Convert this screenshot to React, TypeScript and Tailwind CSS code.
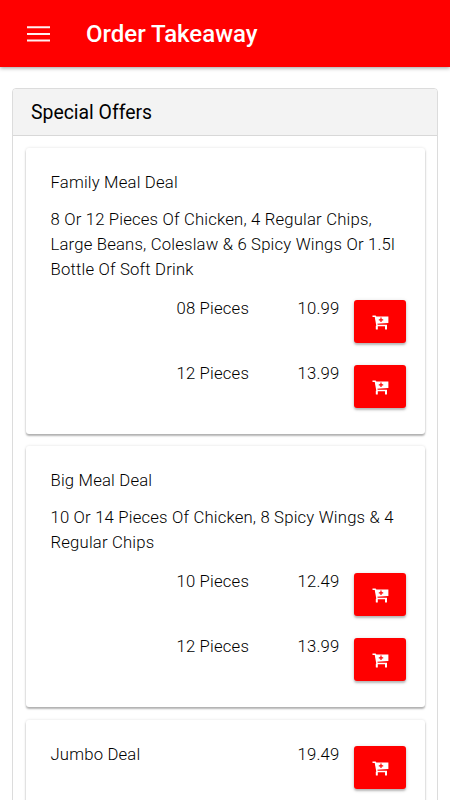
import React from 'react'

type Portion = {
    label: string;
    price: string;
};

type Offer = {
    title: string;
    description?: string;
    price?: string;
    portions: Portion[];
};

const offers: Offer[] = [
    {
        title: 'Family Meal Deal',
        description: '8 Or 12 Pieces Of Chicken, 4 Regular Chips, Large Beans, Coleslaw & 6 Spicy Wings Or 1.5l Bottle Of Soft Drink',
        portions: [
            { label: '08 Pieces', price: '10.99' },
            { label: '12 Pieces', price: '13.99' },
        ],
    },
    {
        title: 'Big Meal Deal',
        description: '10 Or 14 Pieces Of Chicken, 8 Spicy Wings & 4 Regular Chips',
        portions: [
            { label: '10 Pieces', price: '12.49' },
            { label: '12 Pieces', price: '13.99' },
        ],
    },
    {
        title: 'Jumbo Deal',
        price: '19.49',
        portions: [],
    },
];

const MenuIcon = () => (
    <svg width="23" height="16" viewBox="0 0 23 16" fill="none" aria-hidden="true">
        <path d="M0 1.3h23M0 7.9h23M0 14.5h23" stroke="#fff0f0" strokeWidth="2" />
    </svg>
)

const CartPlusIcon = () => (
    <svg width="17" height="15" viewBox="0 0 17 15" fill="none" aria-hidden="true">
        <path d="M0.5 1.3H3.4L5 10.4H15" stroke="#fff" strokeWidth="1.5" strokeLinejoin="round" />
        <path d="M3.2 1.6H16.4V8L4.6 8.8Z" fill="#fff" />
        <path d="M9 2.6v4.4M6.8 4.8h4.4" stroke="#f00" strokeWidth="1.2" />
        <rect x="3.8" y="10.4" width="2" height="4" rx="0.5" fill="#fff" />
        <rect x="13" y="10.4" width="2" height="4" rx="0.5" fill="#fff" />
    </svg>
)

const AddButton = ({ name }: { name: string }) => (
    <button
        aria-label={`Add ${name}`}
        className="mt-[4px] flex h-[43px] w-[52px] shrink-0 items-center justify-center rounded-[3px] bg-[#ff0000] pt-[2px] pl-[2px] shadow-[0_2px_2px_rgba(0,0,0,0.2),0_1px_4px_rgba(0,0,0,0.16)]"
    >
        <CartPlusIcon />
    </button>
)

const PriceRow = ({ name, label, price }: { name: string; label: string; price: string }) => (
    <div className="flex h-[65px] items-start">
        <span className="flex-1">{label}</span>
        <span className="mr-[14px]">{price}</span>
        <AddButton name={name} />
    </div>
)

const OfferCard = ({ offer }: { offer: Offer }) => (
    <div className="rounded-[3px] bg-white pt-[22px] pr-[19px] pb-[8px] pl-[25px] shadow-[0_2px_2px_rgba(0,0,0,0.28),0_0_3px_rgba(0,0,0,0.12)]">
        {offer.price ? (
            <PriceRow name={offer.title} label={offer.title} price={offer.price} />
        ) : (
            <h3>{offer.title}</h3>
        )}
        {offer.description && <p className="mt-[12px] mb-[14px]">{offer.description}</p>}
        {offer.portions.map((portion) => (
            <div key={portion.label} className="pl-[126px]">
                <PriceRow name={offer.title} label={portion.label} price={portion.price} />
            </div>
        ))}
    </div>
)

export default function App() {
    return (
        <div className="h-[800px] w-full overflow-hidden bg-white font-['Roboto',sans-serif] text-black">
            <header className="flex h-[67px] items-center bg-[#ff0000] pl-[27px] text-white shadow-[0_1px_4px_rgba(0,0,0,0.4)]">
                <button aria-label="Menu" className="w-[23px]">
                    <MenuIcon />
                </button>
                <h1 className="ml-[36px] text-[24px] font-medium">Order Takeaway</h1>
            </header>

            <section className="mx-3 mt-[20.5px] rounded-[4px] border border-[#dcdcdc]">
                <h2 className="flex h-[47px] items-center rounded-t-[3px] border-b border-[#d8d8d8] bg-[#f3f3f3] pt-[2px] pl-[18px] text-[19.4px]">
                    Special Offers
                </h2>
                <div className="flex flex-col gap-[12.4px] px-[12.5px] pt-[12.5px] text-[16.7px] leading-[25px] font-light tracking-[0.18px]">
                    {offers.map((offer) => (
                        <OfferCard key={offer.title} offer={offer} />
                    ))}
                </div>
            </section>
        </div>
    )
}
